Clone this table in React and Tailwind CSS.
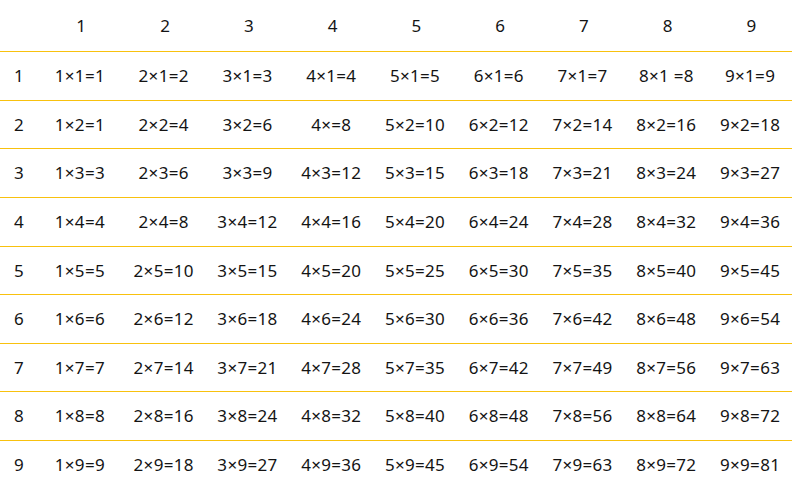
import React from 'react';

// multiplication table, 9x9
const nums = [1, 2, 3, 4, 5, 6, 7, 8, 9];

const cellText = (col, row) => {
  // the source page has a couple of typos, keep them
  if (col === 1 && row === 2) return '1×2=1';
  if (col === 4 && row === 2) return '4×=8';
  if (col === 8 && row === 1) return '8×1 =8';
  return `${col}×${row}=${col * row}`;
};

const App = () => {
  return (
    <div
      className="w-[792px] h-[482px] overflow-hidden bg-white text-[#141414] text-[17px] tracking-[0.3px]"
      style={{ fontFamily: '"Noto Sans", "Open Sans", sans-serif' }}
    >
      <div className="grid grid-cols-[38px_repeat(9,1fr)] h-[52px] border-b border-[#f8c10e] items-center text-center">
        <div />
        {nums.map((n) => (
          <div key={n} className="pl-[3px]">{n}</div>
        ))}
      </div>
      {nums.map((row) => (
        <div
          key={row}
          className="grid grid-cols-[38px_repeat(9,1fr)] h-[48.625px] border-b border-[#f8c10e] items-center text-center"
        >
          <div>{row}</div>
          {nums.map((col) => (
            <div key={col} className="whitespace-pre">
              {cellText(col, row)}
            </div>
          ))}
        </div>
      ))}
    </div>
  );
};

export default App;
